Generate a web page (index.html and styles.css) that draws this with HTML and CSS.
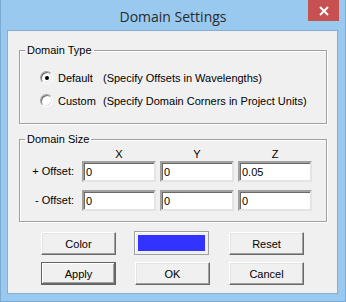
FILE: index.html
```html
<!DOCTYPE html>
<html lang="en">
<head>
    <meta charset="UTF-8">
    <title>Domain Settings</title>
    <link rel="stylesheet" href="styles.css">
</head>
<body>
    <div class="window">
        <div class="titlebar">
            <span class="title">Domain Settings</span>
            <button class="close" title="Close">
                <svg width="10" height="10" viewBox="0 0 10 10">
                    <path d="M1 1 L9 9 M9 1 L1 9" stroke="#fff" stroke-width="2"/>
                </svg>
            </button>
        </div>

        <div class="client">
            <fieldset class="group type-group">
                <legend>Domain Type</legend>
                <div class="radio-list">
                    <label class="radio-row">
                        <span class="radio checked"></span>
                        <span class="radio-name">Default</span>
                        <span>(Specify Offsets in Wavelengths)</span>
                    </label>
                    <label class="radio-row">
                        <span class="radio"></span>
                        <span class="radio-name">Custom</span>
                        <span>(Specify Domain Corners in Project Units)</span>
                    </label>
                </div>
            </fieldset>

            <fieldset class="group size-group">
                <legend>Domain Size</legend>
                <div class="size-grid axis-row">
                    <span></span>
                    <span class="axis">X</span>
                    <span class="axis">Y</span>
                    <span class="axis">Z</span>
                </div>
                <div class="size-grid offset-rows">
                    <span class="row-label">+ Offset:</span>
                    <input type="text" value="0">
                    <input type="text" value="0">
                    <input type="text" value="0.05">

                    <span class="row-label">- Offset:</span>
                    <input type="text" value="0">
                    <input type="text" value="0">
                    <input type="text" value="0">
                </div>
            </fieldset>

            <div class="buttons">
                <button class="btn">Color</button>
                <div class="swatch"><div class="swatch-fill"></div></div>
                <button class="btn">Reset</button>
                <button class="btn default">Apply</button>
                <button class="btn">OK</button>
                <button class="btn">Cancel</button>
            </div>
        </div>
    </div>
</body>
</html>
```

FILE: styles.css
```css
body {
    margin: 0;
    padding: 0;
    font-family: "Liberation Sans", Arial, sans-serif;
    font-size: 11px;
    color: #000;
}

.window {
    width: 346px;
    height: 302px;
    box-sizing: border-box;
    background-color: #99c9ef;
    border: 1px solid #7aaad6;
    border-top: none;
    position: relative;
}

.titlebar {
    height: 30px;
    display: flex;
    justify-content: center;
    align-items: center;
}

.title {
    font-family: "Open Sans", "Noto Sans", sans-serif;
    font-size: 14px;
    color: #2b2b2b;
    margin-top: 2px;
}

.close {
    position: absolute;
    top: 0;
    right: 6px;
    width: 31px;
    height: 21px;
    border: none;
    padding: 0;
    background-color: #c75050;
    display: flex;
    justify-content: center;
    align-items: center;
}

.client {
    margin-left: 6px;
    width: 331px;
    height: 264px;
    box-sizing: border-box;
    background-color: #f0f0f0;
    border: 1px solid #86aed4;
    padding-top: 12px;
}

.group {
    margin: 0 0 0 11px;
    width: 308px;
    box-sizing: border-box;
    border: 1px solid #a0a0a0;
    box-shadow: inset 1px 1px #fff, 1px 1px #fff;
    padding: 0;
}

.group legend {
    margin-left: 5px;
    padding: 0 2px 0 2px;
    line-height: 14px;
}

.type-group {
    padding: 9px 0 11px 0;
}

.radio-list {
    padding-left: 20px;
}

.radio-row {
    display: flex;
    align-items: center;
    height: 23px;
}

.radio {
    width: 13px;
    height: 13px;
    box-sizing: border-box;
    border-radius: 50%;
    border: 1px solid;
    border-color: #a0a0a0 #fff #fff #a0a0a0;
    background-color: #fff;
    box-shadow: inset 1px 1px #696969, inset -1px -1px #e3e3e3;
    display: flex;
    justify-content: center;
    align-items: center;
}

.radio.checked::after {
    content: "";
    width: 4px;
    height: 4px;
    border-radius: 50%;
    background-color: #000;
}

.radio-name {
    margin-left: 5px;
    width: 45px;
}

.size-group {
    margin-top: 8px;
    padding: 1px 0 10px 0;
}

.size-grid {
    display: grid;
    grid-template-columns: 58px 74px 74px 74px;
    column-gap: 4px;
}

.axis-row {
    grid-auto-rows: 14px;
}

.offset-rows {
    grid-auto-rows: 21px;
    row-gap: 8px;
}

.size-grid .axis {
    text-align: center;
    line-height: 14px;
}

.size-grid .row-label {
    text-align: right;
    padding-right: 4px;
    line-height: 21px;
}

.size-grid input[type="text"] {
    width: 74px;
    height: 21px;
    box-sizing: border-box;
    margin: 0;
    padding: 1px 2px 0 2px;
    font-family: "Liberation Sans", Arial, sans-serif;
    font-size: 11px;
    background-color: #fff;
    border: 2px solid;
    border-color: #a0a0a0 #e3e3e3 #e3e3e3 #a0a0a0;
    box-shadow: inset 1px 1px #696969;
    outline: none;
}

.buttons {
    margin-top: 10px;
    padding-left: 33px;
    display: grid;
    grid-template-columns: 75px 75px 75px;
    grid-auto-rows: 23px;
    column-gap: 19px;
    row-gap: 7px;
}

.btn {
    font-family: "Liberation Sans", Arial, sans-serif;
    font-size: 11px;
    color: #000;
    background-color: #f0f0f0;
    border: 1px solid;
    border-color: #fff #696969 #696969 #fff;
    box-shadow: inset -1px -1px #a0a0a0, inset 1px 1px #e3e3e3;
    padding: 0;
}

.btn.default {
    border: 1px solid #646464;
    box-shadow: inset -1px -1px #696969, inset 1px 1px #fff, inset -2px -2px #a0a0a0;
}

.swatch {
    border: 1px solid #a0a0a0;
    box-shadow: inset 1px 1px #fff;
    padding: 3px;
    width: 75px;
    height: 24px;
    box-sizing: border-box;
    margin-top: -1px;
    margin-left: -1px;
}

.swatch-fill {
    height: 100%;
    background-color: #3333ff;
}
```
